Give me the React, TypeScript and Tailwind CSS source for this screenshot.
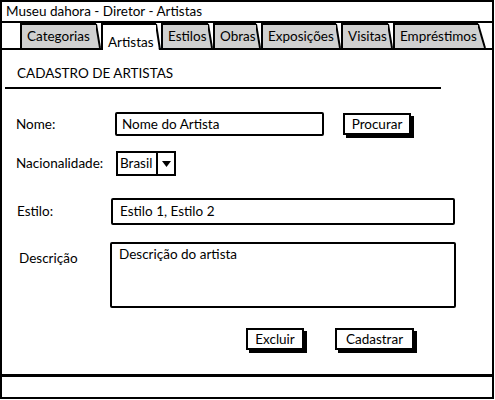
import React from "react";

const GRAY = "#d0d0d0";

function Tab({ label, w, selected = false, last = false }: { label: string; w: number; selected?: boolean; last?: boolean }) {
  const fill = selected ? "#ffffff" : GRAY;
  const h = selected ? 27 : 25;
  const sw = last ? 8 : 5;
  return (
    <div className={selected ? "relative z-10 flex -mb-[2px] h-[27px]" : "flex h-[25px]"}>
      <div
        className={
          "border-l-2 border-t-2 border-black text-[13.5px] leading-[16px] pl-[5px] " +
          (selected ? "bg-white pt-[9px]" : "bg-[#d0d0d0] pt-[3px]")
        }
        style={{ width: w }}
      >
        {label}
      </div>
      <svg width={sw} height={h} className="block shrink-0">
        <polygon points={`0,0 ${sw - 2},${h} 0,${h}`} fill={fill} />
        <line x1="0" y1="1" x2={sw - 1} y2={h} stroke="#000" strokeWidth="2" />
      </svg>
    </div>
  );
}

function Button({ label, w }: { label: string; w: number }) {
  return (
    <div
      className="h-[22px] border-2 border-black bg-white shadow-[3px_3px_0_0_#000] flex items-center justify-center text-[13.5px] leading-[16px]"
      style={{ width: w }}
    >
      {label}
    </div>
  );
}

export default function App() {
  return (
    <div
      className="w-[495px] h-[400px] bg-white text-black"
      style={{ fontFamily: "Lato, 'Open Sans', sans-serif" }}
    >
      <div className="w-[494px] h-[399px] border-2 border-black flex flex-col">
        <div className="h-[21px] border-b-2 border-black pl-[4px] text-[13.5px] leading-[19px]">
          Museu dahora - Diretor - Artistas
        </div>
        <div className="h-[27px] border-b-2 border-black flex items-end pl-[18px] gap-0">
          <Tab label="Categorias" w={76} />
          <Tab label="Artistas" w={55} selected />
          <Tab label="Estilos" w={47} />
          <Tab label="Obras" w={43} />
          <Tab label="Exposições" w={75} />
          <Tab label="Visitas" w={47} />
          <Tab label="Empréstimos" w={85} last />
        </div>
        <div className="flex-1 flex flex-col">
          <div className="pt-[15px] pl-[15px] text-[13.5px] leading-[16px]">CADASTRO DE ARTISTAS</div>
          <div className="mt-[6px] ml-[3px] w-[436px] h-[2px] bg-black" />

          <div className="mt-[23px] flex items-center h-[24px]">
            <span className="pl-[14px] w-[113px] text-[13.5px]">Nome:</span>
            <div className="w-[209px] h-[24px] border-2 border-black rounded-[2px] pl-[5px] text-[13.5px] leading-[20px]">
              Nome do Artista
            </div>
            <div className="ml-[19px]">
              <Button label="Procurar" w={68} />
            </div>
          </div>

          <div className="mt-[15px] flex items-center h-[25px]">
            <span className="pl-[14px] w-[114px] text-[13.5px]">Nacionalidade:</span>
            <div className="flex h-[25px] border-2 border-black">
              <div className="w-[40px] pl-[2px] text-[13.5px] leading-[21px] border-r-2 border-black">Brasil</div>
              <div className="w-[16px] flex items-center justify-center">
                <svg width="9" height="6" viewBox="0 0 9 6">
                  <polygon points="0,0 9,0 4.5,6" fill="#000" />
                </svg>
              </div>
            </div>
          </div>

          <div className="mt-[22px] flex items-center h-[27px]">
            <span className="pl-[15px] w-[109px] text-[13.5px]">Estilo:</span>
            <div className="w-[344px] h-[27px] border-2 border-black rounded-[2px] pl-[7px] text-[13.5px] leading-[23px]">
              Estilo 1, Estilo 2
            </div>
          </div>

          <div className="mt-[17px] flex items-start h-[66px]">
            <span className="pl-[17px] w-[108px] mt-[8px] text-[13.5px] leading-[16px]">Descrição</span>
            <div className="w-[346px] h-[66px] border-2 border-black rounded-[2px] pl-[7px] pt-[2px] text-[13.5px] leading-[16px]">
              Descrição do artista
            </div>
          </div>

          <div className="mt-[19px] flex items-center h-[23px] pl-[244px]">
            <Button label="Excluir" w={58} />
            <div className="ml-[31px]">
              <Button label="Cadastrar" w={79} />
            </div>
          </div>
        </div>
        <div className="h-[23px] border-t-[3px] border-black" />
      </div>
    </div>
  );
}
